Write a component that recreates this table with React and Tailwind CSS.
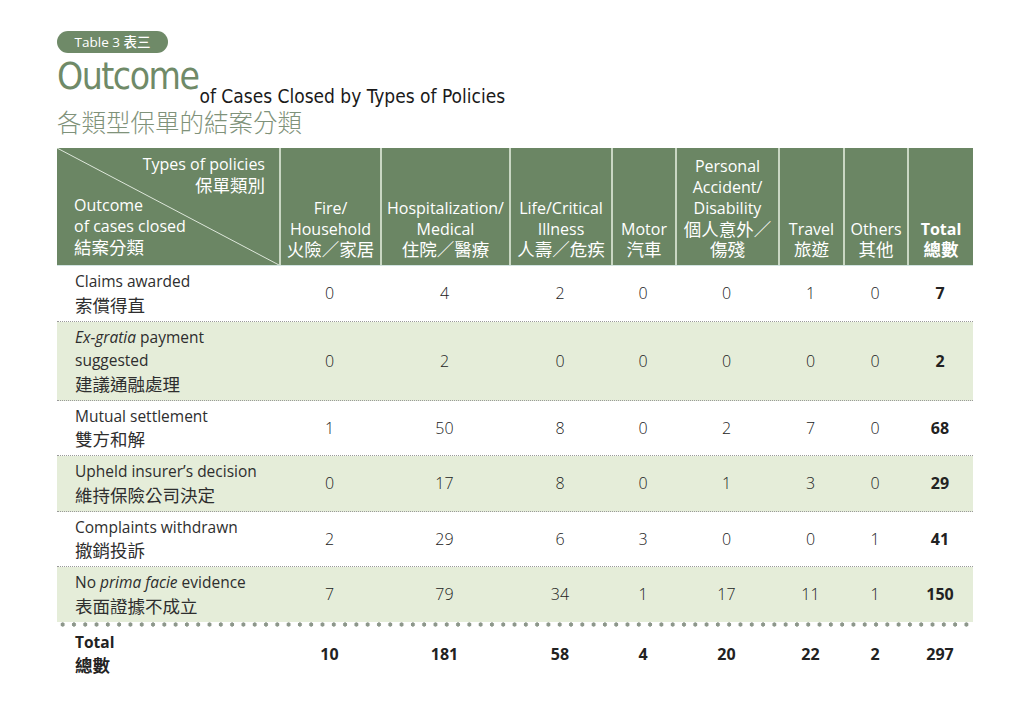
import React from "react";

const COLS = "grid grid-cols-[222px_101px_129px_102px_64px_103px_65px_64px_66px]";

const headers = [
  { en: ["Fire/", "Household"], zh: ["火險／家居"] },
  { en: ["Hospitalization/", "Medical"], zh: ["住院／醫療"] },
  { en: ["Life/Critical", "Illness"], zh: ["人壽／危疾"] },
  { en: ["Motor"], zh: ["汽車"] },
  { en: ["Personal", "Accident/", "Disability"], zh: ["個人意外／", "傷殘"] },
  { en: ["Travel"], zh: ["旅遊"] },
  { en: ["Others"], zh: ["其他"] },
  { en: ["Total"], zh: ["總數"], bold: true },
];

const rows = [
  { label: [<>Claims awarded</>], zh: "索償得直", v: [0, 4, 2, 0, 0, 1, 0, 7] },
  {
    label: [<><i>Ex-gratia</i> payment</>, <>suggested</>],
    zh: "建議通融處理",
    v: [0, 2, 0, 0, 0, 0, 0, 2],
    shade: true,
  },
  { label: [<>Mutual settlement</>], zh: "雙方和解", v: [1, 50, 8, 0, 2, 7, 0, 68] },
  {
    label: [<>Upheld insurer’s decision</>],
    zh: "維持保險公司決定",
    v: [0, 17, 8, 0, 1, 3, 0, 29],
    shade: true,
  },
  { label: [<>Complaints withdrawn</>], zh: "撤銷投訴", v: [2, 29, 6, 3, 0, 0, 1, 41] },
  {
    label: [<>No <i>prima facie</i> evidence</>],
    zh: "表面證據不成立",
    v: [7, 79, 34, 1, 17, 11, 1, 150],
    shade: true,
    last: true,
  },
];

const totals = [10, 181, 58, 4, 20, 22, 2, 297];

export default function App() {
  return (
    <div className="min-h-[714px] w-[1024px] bg-white pl-[57px] pt-[31px] font-['Open_Sans','Noto_Sans_CJK_TC',sans-serif] text-[#333]">
      {/* pill */}
      <div className="flex h-[22px] w-[111px] items-center justify-center rounded-full bg-[#6f8a68] text-[13.5px] font-medium text-white">
        Table 3 表三
      </div>

      {/* title */}
      <div className="mt-[3px] flex items-end whitespace-nowrap font-['DejaVu_Sans_Condensed','DejaVu_Sans',sans-serif]">
        <span className="text-[37px] leading-[42px] tracking-[-1.5px] text-[#6f8a68]">Outcome</span>
        <span className="relative top-[14px] ml-[1px] pb-[6px] text-[19px] leading-[20px] text-[#1a1a1a]">
          of Cases Closed by Types of Policies
        </span>
      </div>
      <div className="mt-[9px] font-['Noto_Sans_CJK_TC',sans-serif] text-[24.5px] font-light leading-[30px] text-[#7f927a]">
        各類型保單的結案分類
      </div>

      {/* table */}
      <div className="mt-[11px] w-[916px]">
        {/* header */}
        <div className={`${COLS} h-[118px] border-b border-[#d3e4e2] bg-[#6b8664] text-[16px] leading-[20.7px] text-white`}>
          <div className="relative flex flex-col pt-[6px]">
            <svg className="absolute inset-0 h-full w-full" viewBox="0 0 222 118" preserveAspectRatio="none">
              <line x1="0" y1="0" x2="222" y2="118" stroke="#dfe8dc" strokeWidth="1" />
            </svg>
            <div className="relative pr-[14px] text-right">Types of policies</div>
            <div className="relative pr-[14px] text-right text-[17.5px]">保單類別</div>
            <div className="relative pl-[17px]">Outcome</div>
            <div className="relative pl-[17px]">of cases closed</div>
            <div className="relative pl-[17px] text-[17.5px]">結案分類</div>
          </div>
          {headers.map((h, i) => (
            <div
              key={i}
              className={`flex flex-col items-center justify-end border-l-2 border-[#c9d7c3] pb-[5px] text-center ${h.bold ? "font-bold" : ""}`}
            >
              {h.en.map((t, j) => (
                <div key={j} className="whitespace-nowrap">{t}</div>
              ))}
              {h.zh.map((t, j) => (
                <div key={j} className="whitespace-nowrap text-[17.5px]">{t}</div>
              ))}
            </div>
          ))}
        </div>

        {/* body rows */}
        {rows.map((r, i) => (
          <div key={i}>
            <div
              className={`${COLS} ${r.shade ? "bg-[#e5edd9]" : "bg-white"} ${r.last ? "" : "border-b border-dotted border-[#9a9a9a]"}`}
            >
              <div className="pb-[3.5px] pt-[4px] pl-[18px] text-[15.5px] leading-[23.5px] text-[#2e2e2e]">
                {r.label.map((l, j) => (
                  <div key={j} className="whitespace-nowrap">{l}</div>
                ))}
                <div className="whitespace-nowrap text-[17.5px]">{r.zh}</div>
              </div>
              {r.v.map((n, j) => (
                <div
                  key={j}
                  className={`flex items-center justify-center text-[16px] ${j === 7 ? "font-bold text-[#222]" : "font-light text-[#222]"}`}
                >
                  {n}
                </div>
              ))}
            </div>
            {r.last && (
              <div className="h-[5px] bg-[image:radial-gradient(circle,#8d978b_1.9px,transparent_2.4px)] bg-[length:11.3px_5px] bg-repeat-x" />
            )}
          </div>
        ))}

        {/* total row */}
        <div className={`${COLS} font-bold text-[#222]`}>
          <div className="pb-[4px] pt-[4px] pl-[18px] text-[15.5px] leading-[23.5px]">
            <div>Total</div>
            <div className="text-[17.5px]">總數</div>
          </div>
          {totals.map((n, j) => (
            <div key={j} className="flex items-center justify-center text-[16px]">
              {n}
            </div>
          ))}
        </div>
      </div>
    </div>
  );
}
